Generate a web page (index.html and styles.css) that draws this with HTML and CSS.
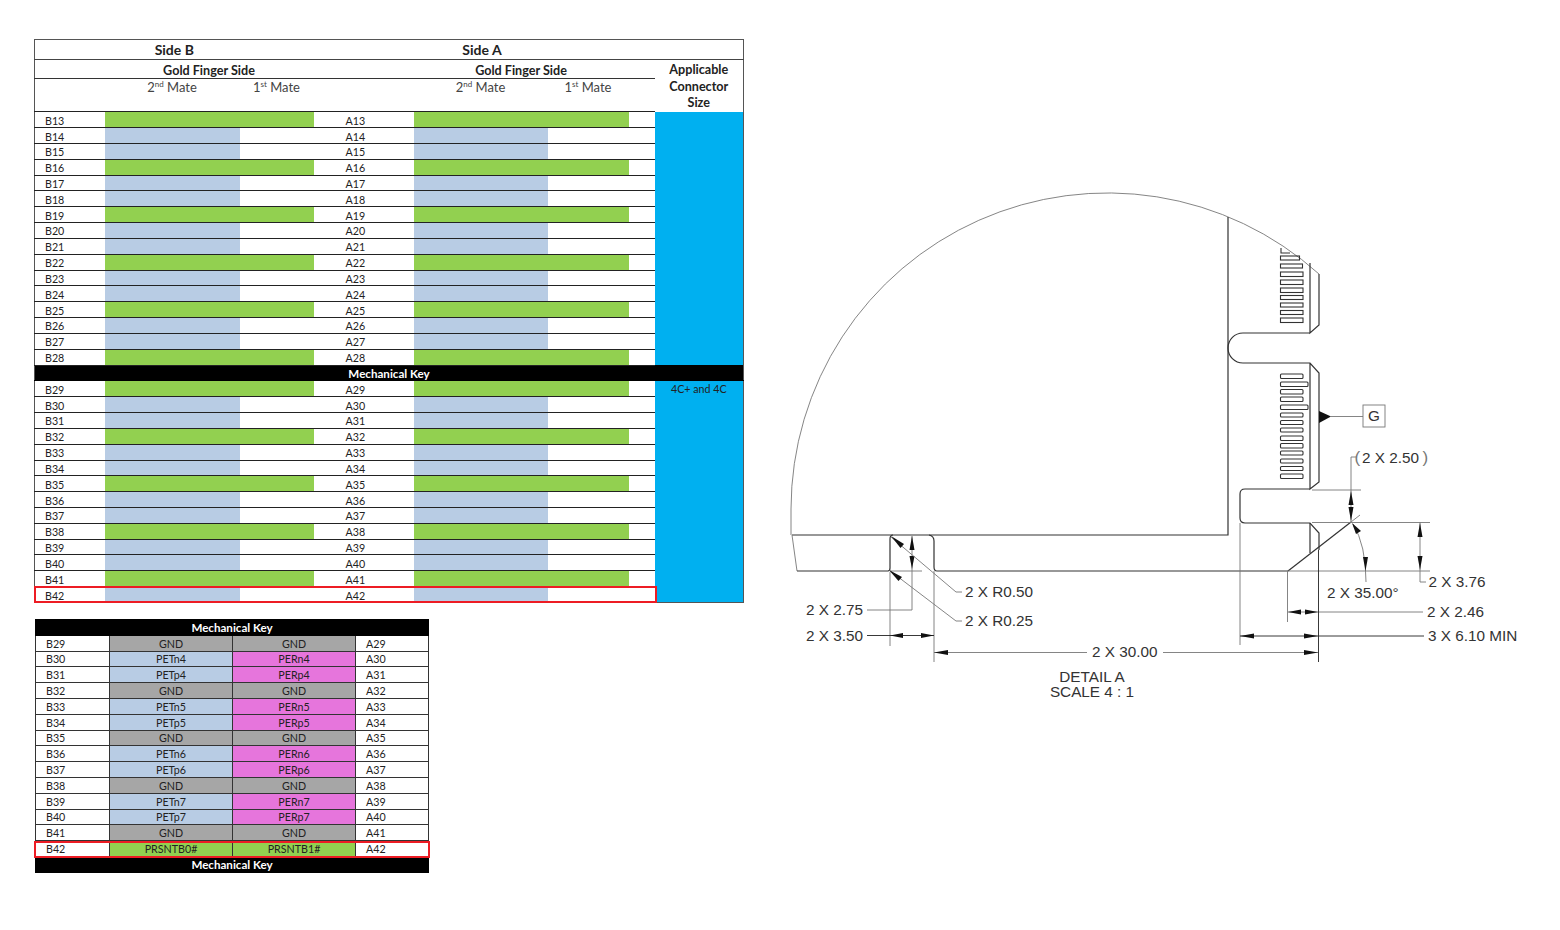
FILE: index.html
```html
<!DOCTYPE html>
<html lang="en">
<head>
  <meta charset="UTF-8">
  <title>Connector pinout and detail A</title>
  <link rel="stylesheet" href="styles.css">
</head>
<body>

<div class="tables">
  <div class="table-wrap top-wrap">
    <table class="pins">
      <colgroup>
        <col class="c-label-b"><col class="c-m2-b"><col class="c-m1-b"><col class="c-gap-b">
        <col class="c-label-a"><col class="c-m2-a"><col class="c-m1-a"><col class="c-gap-a"><col class="c-size">
      </colgroup>
      <tr class="h-side">
        <th colspan="3">Side B</th><th></th><th colspan="3">Side A</th><th></th><th></th>
      </tr>
      <tr class="h-gold">
        <th></th><th colspan="2">Gold Finger Side</th><th></th><th></th><th colspan="2">Gold Finger Side</th><th></th>
        <th rowspan="2" class="size-head">Applicable<br>Connector<br>Size</th>
      </tr>
      <tr class="h-mate">
        <td></td><td>2<sup>nd</sup> Mate</td><td>1<sup>st</sup> Mate</td><td></td>
        <td></td><td>2<sup>nd</sup> Mate</td><td>1<sup>st</sup> Mate</td><td></td>
      </tr>
      <tr><td>B13</td><td class="g"></td><td class="g"></td><td></td><td>A13</td><td class="g"></td><td class="g"></td><td></td><td rowspan="16" class="size"></td></tr>
      <tr><td>B14</td><td class="b"></td><td></td><td></td><td>A14</td><td class="b"></td><td></td><td></td></tr>
      <tr><td>B15</td><td class="b"></td><td></td><td></td><td>A15</td><td class="b"></td><td></td><td></td></tr>
      <tr><td>B16</td><td class="g"></td><td class="g"></td><td></td><td>A16</td><td class="g"></td><td class="g"></td><td></td></tr>
      <tr><td>B17</td><td class="b"></td><td></td><td></td><td>A17</td><td class="b"></td><td></td><td></td></tr>
      <tr><td>B18</td><td class="b"></td><td></td><td></td><td>A18</td><td class="b"></td><td></td><td></td></tr>
      <tr><td>B19</td><td class="g"></td><td class="g"></td><td></td><td>A19</td><td class="g"></td><td class="g"></td><td></td></tr>
      <tr><td>B20</td><td class="b"></td><td></td><td></td><td>A20</td><td class="b"></td><td></td><td></td></tr>
      <tr><td>B21</td><td class="b"></td><td></td><td></td><td>A21</td><td class="b"></td><td></td><td></td></tr>
      <tr><td>B22</td><td class="g"></td><td class="g"></td><td></td><td>A22</td><td class="g"></td><td class="g"></td><td></td></tr>
      <tr><td>B23</td><td class="b"></td><td></td><td></td><td>A23</td><td class="b"></td><td></td><td></td></tr>
      <tr><td>B24</td><td class="b"></td><td></td><td></td><td>A24</td><td class="b"></td><td></td><td></td></tr>
      <tr><td>B25</td><td class="g"></td><td class="g"></td><td></td><td>A25</td><td class="g"></td><td class="g"></td><td></td></tr>
      <tr><td>B26</td><td class="b"></td><td></td><td></td><td>A26</td><td class="b"></td><td></td><td></td></tr>
      <tr><td>B27</td><td class="b"></td><td></td><td></td><td>A27</td><td class="b"></td><td></td><td></td></tr>
      <tr><td>B28</td><td class="g"></td><td class="g"></td><td></td><td>A28</td><td class="g"></td><td class="g"></td><td></td></tr>
      <tr><td colspan="9" class="key">Mechanical Key</td></tr>
      <tr><td>B29</td><td class="g"></td><td class="g"></td><td></td><td>A29</td><td class="g"></td><td class="g"></td><td></td><td rowspan="14" class="size">4C+ and 4C</td></tr>
      <tr><td>B30</td><td class="b"></td><td></td><td></td><td>A30</td><td class="b"></td><td></td><td></td></tr>
      <tr><td>B31</td><td class="b"></td><td></td><td></td><td>A31</td><td class="b"></td><td></td><td></td></tr>
      <tr><td>B32</td><td class="g"></td><td class="g"></td><td></td><td>A32</td><td class="g"></td><td class="g"></td><td></td></tr>
      <tr><td>B33</td><td class="b"></td><td></td><td></td><td>A33</td><td class="b"></td><td></td><td></td></tr>
      <tr><td>B34</td><td class="b"></td><td></td><td></td><td>A34</td><td class="b"></td><td></td><td></td></tr>
      <tr><td>B35</td><td class="g"></td><td class="g"></td><td></td><td>A35</td><td class="g"></td><td class="g"></td><td></td></tr>
      <tr><td>B36</td><td class="b"></td><td></td><td></td><td>A36</td><td class="b"></td><td></td><td></td></tr>
      <tr><td>B37</td><td class="b"></td><td></td><td></td><td>A37</td><td class="b"></td><td></td><td></td></tr>
      <tr><td>B38</td><td class="g"></td><td class="g"></td><td></td><td>A38</td><td class="g"></td><td class="g"></td><td></td></tr>
      <tr><td>B39</td><td class="b"></td><td></td><td></td><td>A39</td><td class="b"></td><td></td><td></td></tr>
      <tr><td>B40</td><td class="b"></td><td></td><td></td><td>A40</td><td class="b"></td><td></td><td></td></tr>
      <tr><td>B41</td><td class="g"></td><td class="g"></td><td></td><td>A41</td><td class="g"></td><td class="g"></td><td></td></tr>
      <tr><td>B42</td><td class="b"></td><td></td><td></td><td>A42</td><td class="b"></td><td></td><td></td></tr>
    </table>
    <div class="flag flag-top"></div>
  </div>

  <div class="table-wrap bottom-wrap">
    <table class="signals">
      <colgroup><col class="s-label"><col class="s-sig"><col class="s-sig"><col class="s-end"></colgroup>
      <tr><td colspan="4" class="key">Mechanical Key</td></tr>
      <tr><td>B29</td><td class="gnd">GND</td><td class="gnd">GND</td><td>A29</td></tr>
      <tr><td>B30</td><td class="b">PETn4</td><td class="p">PERn4</td><td>A30</td></tr>
      <tr><td>B31</td><td class="b">PETp4</td><td class="p">PERp4</td><td>A31</td></tr>
      <tr><td>B32</td><td class="gnd">GND</td><td class="gnd">GND</td><td>A32</td></tr>
      <tr><td>B33</td><td class="b">PETn5</td><td class="p">PERn5</td><td>A33</td></tr>
      <tr><td>B34</td><td class="b">PETp5</td><td class="p">PERp5</td><td>A34</td></tr>
      <tr><td>B35</td><td class="gnd">GND</td><td class="gnd">GND</td><td>A35</td></tr>
      <tr><td>B36</td><td class="b">PETn6</td><td class="p">PERn6</td><td>A36</td></tr>
      <tr><td>B37</td><td class="b">PETp6</td><td class="p">PERp6</td><td>A37</td></tr>
      <tr><td>B38</td><td class="gnd">GND</td><td class="gnd">GND</td><td>A38</td></tr>
      <tr><td>B39</td><td class="b">PETn7</td><td class="p">PERn7</td><td>A39</td></tr>
      <tr><td>B40</td><td class="b">PETp7</td><td class="p">PERp7</td><td>A40</td></tr>
      <tr><td>B41</td><td class="gnd">GND</td><td class="gnd">GND</td><td>A41</td></tr>
      <tr><td>B42</td><td class="g">PRSNTB0#</td><td class="g">PRSNTB1#</td><td>A42</td></tr>
      <tr><td colspan="4" class="key">Mechanical Key</td></tr>
    </table>
    <div class="flag flag-bottom"></div>
  </div>
</div>

<!-- viewBox uses page coordinates so the numbers can be read off the drawing -->
<svg class="drawing" viewBox="780 0 780 930" width="780" height="930">
  <!-- board outline -->
  <path class="thin" d="M791 535 V509 A316.5 316.5 0 0 1 1319 274"/>
  <path class="line" d="M1228 217 V535 H792"/>
  <path class="thin" d="M792 535 L797 571"/>
  <path class="line" d="M797 571 H888 Q890 571 890 568 V539 Q890 535 893 535"/>
  <path class="line" d="M929 535 Q934 536 934 541 V567 Q934 571 937 571 H1288"/>
  <path class="line" d="M1319 274 V325 L1310 333 V263"/>
  <path class="line" d="M1310 333 H1243 A15 15 0 0 0 1243 363 H1310 L1319 373 V482 L1310 489 V363"/>
  <path class="line" d="M1310 489 H1245 Q1240 489 1240 494 V518 Q1240 523 1245 523 H1310 L1319 533 V550"/>
  <path class="line" d="M1310 523 V553"/>
  <path class="line" d="M1288 571 L1351 522"/>

  <!-- upper teeth -->
  <g class="teeth">
    <path d="M1281 248 V253 H1290"/>
    <rect x="1280.5" y="256" width="19" height="4"/>
    <rect x="1280.5" y="264" width="22" height="4"/>
    <rect x="1280.5" y="272" width="22.5" height="4.5"/>
    <rect x="1280.5" y="280" width="22.5" height="4.5"/>
    <rect x="1280.5" y="288" width="22.5" height="4.5"/>
    <rect x="1280.5" y="295.5" width="22.5" height="4"/>
    <rect x="1280.5" y="303" width="22.5" height="4"/>
    <rect x="1280.5" y="310.5" width="22.5" height="4"/>
    <rect x="1280.5" y="318" width="22.5" height="4.5"/>
  </g>
  <!-- lower teeth -->
  <g class="teeth">
    <rect x="1280.5" y="374" width="22.5" height="4.5" rx="1"/>
    <rect x="1280.5" y="382" width="27.5" height="4.5" rx="1"/>
    <rect x="1280.5" y="389.5" width="22.5" height="4.5" rx="1"/>
    <rect x="1280.5" y="397" width="22.5" height="4.5" rx="1"/>
    <rect x="1280.5" y="405" width="27.5" height="4.5" rx="1"/>
    <rect x="1280.5" y="413" width="22.5" height="4" rx="1"/>
    <rect x="1280.5" y="420.5" width="22.5" height="4" rx="1"/>
    <rect x="1280.5" y="428" width="22.5" height="4" rx="1"/>
    <rect x="1280.5" y="436" width="22.5" height="4.5" rx="1"/>
    <rect x="1280.5" y="443.5" width="22.5" height="4.5" rx="1"/>
    <rect x="1280.5" y="451" width="22.5" height="4" rx="1"/>
    <rect x="1280.5" y="459" width="22.5" height="4" rx="1"/>
    <rect x="1280.5" y="466.5" width="22.5" height="4" rx="1"/>
    <rect x="1280.5" y="474" width="22.5" height="4.5" rx="1"/>
  </g>

  <!-- datum G -->
  <polygon class="head" points="1319,411 1319,423 1331,416.500"/>
  <path class="thin" d="M1330 416.500 H1363"/>
  <rect class="thin" x="1363" y="405" width="22" height="22"/>
  <text class="dim" x="1374" y="421" text-anchor="middle">G</text>

  <!-- right side dimensions -->
  <path class="thin" d="M1312 490 H1361 M1312 522.500 H1430 M1288 571 H1430 M1351 522 L1360 515"/>
  <path class="thin" d="M1356 457 H1351 V522"/>
  <polygon class="head" points="1351,491 1348.500,505 1353.500,505"/>
  <polygon class="head" points="1351,521 1348.500,507 1353.500,507"/>
  <text class="dim" x="1362" y="462.500">2 X 2.50</text>
  <text class="paren" x="1354.500" y="463">(</text>
  <text class="paren" x="1422.500" y="463">)</text>

  <path class="thin" d="M1420 522 V582 H1426"/>
  <polygon class="head" points="1420,523 1417.500,537 1422.500,537"/>
  <polygon class="head" points="1420,570 1417.500,556 1422.500,556"/>
  <text class="dim" x="1428.500" y="587">2 X 3.76</text>

  <path class="thin" d="M1353 524 Q1366 545 1366 582"/>
  <polygon class="head" points="1352,523 1361,531 1356,534"/>
  <polygon class="head" points="1365.500,571 1363,557 1368,557"/>
  <text class="dim" x="1327" y="597.500">2 X 35.00°</text>

  <path class="thin" d="M1287.500 571 V622 M1288 612 H1423"/>
  <polygon class="head" points="1288,612 1301,609.500 1301,614.500"/>
  <polygon class="head" points="1318,612 1305,609.500 1305,614.500"/>
  <text class="dim" x="1427" y="617">2 X 2.46</text>

  <path class="thin" d="M1240 523 V645"/>
  <path class="thin dark" d="M1318.500 550 V662 M1240 636 H1424"/>
  <polygon class="head" points="1240,636 1254,633.500 1254,638.500"/>
  <polygon class="head" points="1318,636 1304,633.500 1304,638.500"/>
  <text class="dim" x="1428" y="641">3 X 6.10 MIN</text>

  <!-- bottom dimensions -->
  <path class="thin" d="M934 571 V662 M934 652.500 H1087 M1163 652.500 H1318"/>
  <polygon class="head" points="934,652.500 948,650 948,655"/>
  <polygon class="head" points="1318,652.500 1304,650 1304,655"/>
  <text class="dim" x="1092" y="657">2 X 30.00</text>

  <path class="thin" d="M890 572 V646 M890 571 H922"/>
  <path class="thin" d="M912 536 V610 H867"/>
  <polygon class="head" points="912,536 909.500,550 914.500,550"/>
  <polygon class="head" points="912,569 909.500,556 914.500,556"/>
  <text class="dim" x="806" y="615">2 X 2.75</text>

  <path class="thin dark" d="M867 635.500 H934"/>
  <polygon class="head" points="890,635.500 903,633 903,638"/>
  <polygon class="head" points="934,635.500 921,633 921,638"/>
  <text class="dim" x="806" y="640.500">2 X 3.50</text>

  <path class="thin" d="M891 537 L956 592 H962"/>
  <polygon class="head" points="891,536 904,544 900.500,548"/>
  <text class="dim" x="965" y="597">2 X R0.50</text>

  <path class="thin" d="M889 570 L956 621 H962"/>
  <polygon class="head" points="889,570 902,577 898.500,581"/>
  <text class="dim" x="965" y="626">2 X R0.25</text>

  <text class="dim" x="1092" y="682" text-anchor="middle">DETAIL A</text>
  <text class="dim" x="1092" y="697" text-anchor="middle">SCALE 4 : 1</text>
</svg>

</body>
</html>
```

FILE: styles.css
```css
body {
  display: flex;
  margin: 0;
  height: 930px;
  overflow: hidden;
  background-color: #fff;
  color: #222;
  font-family: Lato, "Open Sans", sans-serif;
}

.tables {
  display: flex;
  flex-direction: column;
  gap: 16px;
  flex: none;
  width: 780px;
  box-sizing: border-box;
  padding: 39px 0 0 34px;
}

.table-wrap {
  position: relative;
}

table {
  border-collapse: collapse;
  table-layout: fixed;
  font-size: 10.7px;
  line-height: 12px;
}

td,
th {
  padding: 0;
}

/* top table */
.pins {
  width: 709px;
  border: 1px solid #555;
}

.c-label-b { width: 70px; }
.c-m2-b { width: 135px; }
.c-m1-b { width: 74px; }
.c-gap-b { width: 22px; }
.c-label-a { width: 78px; }
.c-m2-a { width: 134px; }
.c-m1-a { width: 81px; }
.c-gap-a { width: 26px; }
.c-size { width: 89px; }

.pins tr {
  height: 15.84px;
}

.pins td {
  border-bottom: 1px solid #222;
  padding-top: 2px;
}

.pins td:first-child,
.pins td:nth-child(5) {
  padding-left: 10px;
}

.pins .h-side {
  height: 20px;
}

.h-side th {
  border-bottom: 1px solid #444;
  padding-top: 1px;
  font-size: 14px;
}

.pins .h-gold {
  height: 19px;
}

.h-gold th {
  border-bottom: 1px solid #333;
  padding-top: 3px;
  font-size: 12.6px;
}

.h-gold .size-head {
  border-bottom: 0;
  line-height: 16.6px;
  vertical-align: top;
  padding-top: 2px;
}

.pins .h-mate {
  height: 33px;
}

.h-mate td {
  text-align: center;
  vertical-align: top;
  padding-top: 2px;
  font-size: 13px;
  color: #444;
}

.pins .h-mate td:first-child,
.pins .h-mate td:nth-child(5) {
  padding-left: 0;
}

sup {
  font-size: 8px;
  line-height: 0;
}

.pins .size {
  border-bottom: 0;
  background-color: #00b0f0;
  text-align: center;
  vertical-align: top;
  padding-top: 2px;
}

/* shared cell colours */
.g { background-color: #92d050; }
.b { background-color: #b8cce4; }
.p { background-color: #e675dc; }
.gnd { background-color: #a6a6a6; }

/* bottom table */
.signals {
  width: 393px;
  margin-left: 1px;
}

.s-label { width: 74px; }
.s-sig { width: 123px; }
.s-end { width: 73px; }

.signals tr {
  height: 15.8px;
}

.signals td {
  border: 1px solid #333;
  padding-top: 1px;
  text-align: center;
}

.signals td:first-child,
.signals td:last-child {
  padding-left: 10px;
  text-align: left;
}

/* black key bands, after the cell rules so they win */
.pins td.key,
.signals td.key {
  background-color: #000;
  color: #fff;
  font-size: 11.6px;
  font-weight: bold;
  text-align: center;
  padding-left: 0;
  border-color: #000;
}

/* red marker around row B42 */
.flag {
  position: absolute;
  box-sizing: border-box;
  border: 2px solid #ed1c24;
}

.flag-top {
  left: 0;
  bottom: 0;
  width: 623px;
  height: 17px;
}

.flag-bottom {
  left: 0;
  bottom: 15px;
  width: 396px;
  height: 17px;
}

/* drawing */
.drawing {
  flex: none;
  display: block;
}

.line,
.thin,
.teeth {
  fill: none;
}

.line {
  stroke: #333;
  stroke-width: 1.2;
}

.thin {
  stroke: #777;
  stroke-width: 0.9;
}

.dark {
  stroke: #222;
}

.teeth {
  stroke: #333;
  stroke-width: 1.1;
}

.head {
  fill: #111;
}

.dim {
  fill: #333;
  font-family: "Liberation Sans", Arial, sans-serif;
  font-size: 15.3px;
}

.paren {
  fill: #777;
  font-family: "Liberation Sans", Arial, sans-serif;
  font-size: 17px;
  font-weight: 200;
}
```
